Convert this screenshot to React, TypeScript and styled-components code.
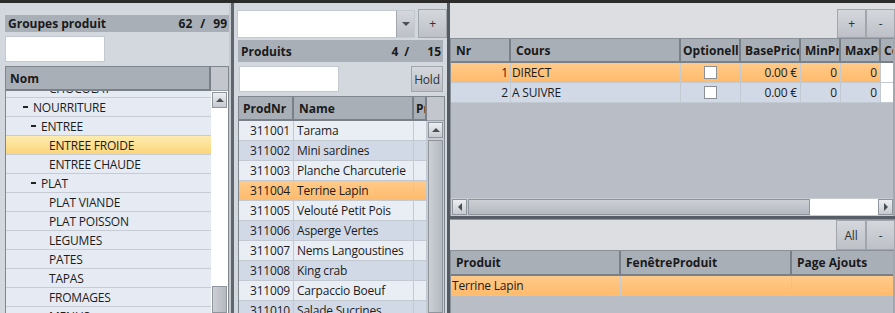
import React, { useLayoutEffect, useRef } from 'react';
import styled, { createGlobalStyle, css } from 'styled-components';

const GlobalStyle = createGlobalStyle`
  html, body { margin: 0; padding: 0; overflow: hidden; background: #2b2b2b; }
  body { font-family: "Open Sans", "Noto Sans", Arial, sans-serif; font-size: 12px; letter-spacing: -0.2px; color: #1c1c1c; }
  * { box-sizing: border-box; }
`;

const Root = styled.div`
  width: 895px;
  height: 313px;
  display: flex;
  flex-direction: column;
  background: #2b2b2b;
  overflow: hidden;
`;

const TopStrip = styled.div`
  height: 3px;
  flex: none;
  background: #2b2b2b;
`;

const Workspace = styled.div`
  flex: 1;
  min-height: 0;
  display: flex;
`;

const Panel = styled.div<{ $w: number; $pad: string }>`
  width: ${p => p.$w}px;
  flex: none;
  display: flex;
  flex-direction: column;
  background: #d3d8df;
  padding: ${p => p.$pad};
  min-height: 0;
`;

const Splitter = styled.div<{ $w: number; $bg: string }>`
  width: ${p => p.$w}px;
  flex: none;
  background: ${p => p.$bg};
`;

const TitleBar = styled.div<{ $h: number; $m: string }>`
  height: ${p => p.$h}px;
  flex: none;
  margin: ${p => p.$m};
  display: flex;
  align-items: center;
  justify-content: space-between;
  background: #a9afb7;
  padding: 0 2px 0 3px;
  font-size: 12px;
  font-weight: 700;
  letter-spacing: 0;
  color: #1a1a1a;
  white-space: nowrap;
`;

const Fraction = styled.div`
  display: flex;
  align-items: center;
`;

const FracPart = styled.span<{ $ml?: number }>`
  margin-left: ${p => p.$ml ?? 0}px;
`;

const SearchInput = styled.input<{ $w: number }>`
  width: ${p => p.$w}px;
  height: 26px;
  flex: none;
  border: 1px solid #c4c9d0;
  background: #fff;
  outline: none;
  padding: 0 4px;
  font: inherit;
`;

const SearchRow = styled.div<{ $m: string }>`
  display: flex;
  justify-content: space-between;
  align-items: center;
  flex: none;
  margin: ${p => p.$m};
`;

const Button = styled.button<{ $w: number; $h: number }>`
  width: ${p => p.$w}px;
  height: ${p => p.$h}px;
  flex: none;
  border: 1px solid #a1a6ad;
  background: linear-gradient(#d4d7dc, #bdc1c7);
  font: inherit;
  letter-spacing: inherit;
  color: #2e3238;
  padding: 0;
  display: flex;
  align-items: center;
  justify-content: center;
`;

const ComboRow = styled.div`
  display: flex;
  align-items: flex-start;
  gap: 3px;
  flex: none;
`;

const Combo = styled.div`
  width: 178px;
  height: 28px;
  margin-top: 1px;
  display: flex;
  border: 1px solid #c4c9d0;
  background: #fff;
`;

const ComboInput = styled.input`
  flex: 1;
  min-width: 0;
  border: none;
  outline: none;
  background: #fff;
  font: inherit;
`;

const ComboButton = styled.div`
  width: 18px;
  flex: none;
  border-left: 1px solid #a1a6ad;
  background: linear-gradient(#d4d7dc, #bdc1c7);
  display: flex;
  align-items: center;
  justify-content: center;
`;

const Arrow = styled.span<{ $dir: 'up' | 'down' | 'left' | 'right'; $c?: string }>`
  width: 0;
  height: 0;
  border-style: solid;
  ${({ $dir, $c = '#4a4f55' }) =>
    $dir === 'up'
      ? css`border-width: 0 4px 4px 4px; border-color: transparent transparent ${$c} transparent;`
      : $dir === 'down'
      ? css`border-width: 4px 4px 0 4px; border-color: ${$c} transparent transparent transparent;`
      : $dir === 'left'
      ? css`border-width: 4px 4px 4px 0; border-color: transparent ${$c} transparent transparent;`
      : css`border-width: 4px 0 4px 4px; border-color: transparent transparent transparent ${$c};`}
`;

/* grids with vertical scrollbar */
const ScrollGrid = styled.div<{ $head: number; $m: string }>`
  flex: 1;
  min-height: 0;
  margin: ${p => p.$m};
  display: grid;
  grid-template-columns: 1fr 17px;
  grid-template-rows: ${p => p.$head}px 1fr;
  border: 1px solid #80868e;
  border-bottom: none;
  background: #fff;
  overflow: hidden;
`;

const HeaderRow = styled.div`
  display: flex;
  min-width: 0;
  overflow: hidden;
  background: #a9afb7;
`;

const HeadCell = styled.div<{ $w?: number; $pl?: number }>`
  ${p => (p.$w ? css`width: ${p.$w}px; flex: none;` : css`flex: 1;`)}
  display: flex;
  align-items: center;
  padding-left: ${p => p.$pl ?? 5}px;
  background: #a9afb7;
  border-right: 2px solid #7a8088;
  border-bottom: 2px solid #7a8088;
  font-size: 12px;
  font-weight: 700;
  letter-spacing: 0;
  color: #1a1a1a;
  white-space: nowrap;
  overflow: hidden;
  text-overflow: clip;
`;

const HeadFiller = styled.div`
  background: #c3c7cd;
  border-bottom: 1px solid #9ba1a8;
`;

const Viewport = styled.div`
  overflow: hidden;
  min-height: 0;
`;

const VScroll = styled.div<{ $track: string }>`
  display: flex;
  flex-direction: column;
  background: ${p => p.$track};
  min-height: 0;
  overflow: hidden;
  padding: 1px 1px 0;
`;

const ScrollArrow = styled.div<{ $w?: number }>`
  ${p => (p.$w ? css`width: ${p.$w}px;` : css`height: 16px;`)}
  flex: none;
  border: 1px solid #8f959c;
  background: linear-gradient(#eceef1, #c6cad0);
  display: flex;
  align-items: center;
  justify-content: center;
`;

const ScrollGap = styled.div<{ $size: number }>`
  flex: none;
  height: ${p => p.$size}px;
`;

const VThumb = styled.div`
  flex: 1;
  border: 1px solid #8f959c;
  background: linear-gradient(90deg, #ccd0d5, #b4b9c0);
`;

/* tree */
const TreeRow = styled.div<{ $level: number; $selected?: boolean }>`
  height: 19px;
  display: flex;
  align-items: center;
  padding-left: ${p => 17 + 8 * (p.$level - 1)}px;
  background: ${p => (p.$selected ? 'linear-gradient(#fdecae, #fbd57c)' : '#e6ebf3')};
  border-bottom: 1px solid #c7ccd4;
  white-space: nowrap;
`;

const Expander = styled.span<{ $on: boolean }>`
  width: 5px;
  height: 2px;
  flex: none;
  margin-right: 5px;
  background: ${p => (p.$on ? '#222' : 'transparent')};
`;

/* data rows */
type Tone = 'light' | 'dark' | 'sel';
const toneBg: Record<Tone, string> = {
  light: '#e9edf4',
  dark: '#d2d9e6',
  sel: 'linear-gradient(#ffca8a, #ffbb6c)',
};

const DataRow = styled.div<{ $tone: Tone }>`
  height: 20px;
  display: flex;
  background: ${p => toneBg[p.$tone]};
  border-bottom: 1px solid #c3c9d1;
  white-space: nowrap;
`;

const Cell = styled.div<{ $w: number; $align?: 'left' | 'right' | 'center'; $pad?: string; $white?: boolean }>`
  width: ${p => p.$w}px;
  flex: none;
  display: flex;
  align-items: center;
  justify-content: ${p => (p.$align === 'right' ? 'flex-end' : p.$align === 'center' ? 'center' : 'flex-start')};
  padding: ${p => p.$pad ?? '0 3px'};
  border-right: 1px solid #c3c9d1;
  overflow: hidden;
  ${p => p.$white && css`background: #fff;`}
`;

const CheckBox = styled.span`
  width: 13px;
  height: 13px;
  background: #fff;
  border: 1px solid #8c9198;
`;

/* right side */
const RightPanel = styled.div`
  flex: 1;
  min-width: 0;
  display: flex;
  flex-direction: column;
  background: #dcdee2;
`;

const Toolbar = styled.div<{ $h: number }>`
  height: ${p => p.$h}px;
  flex: none;
  display: flex;
  justify-content: flex-end;
  align-items: flex-end;
  background: #dcdee2;
`;

const TableFrame = styled.div<{ $h?: number }>`
  ${p => (p.$h ? css`height: ${p.$h}px; flex: none;` : css`flex: 1; min-height: 0;`)}
  display: flex;
  flex-direction: column;
  border-left: 1px solid #8a9097;
  border-top: 1px solid #8a9097;
  border-right: 2px solid #a3a8af;
  background: #b9bec6;
  overflow: hidden;
`;

const TableHeader = styled.div<{ $h: number }>`
  height: ${p => p.$h}px;
  flex: none;
  display: flex;
  overflow: hidden;
`;

const TableBody = styled.div`
  flex: 1;
  min-height: 0;
  overflow: hidden;
`;

const HScroll = styled.div`
  height: 18px;
  flex: none;
  display: flex;
  padding: 1px 0 1px 1px;
  background: #c9cdd3;
`;

const HThumb = styled.div`
  width: 342px;
  flex: none;
  margin-left: 1px;
  border: 1px solid #8f959c;
  background: linear-gradient(#ccd0d5, #b4b9c0);
`;

const HTrack = styled.div`
  flex: 1;
  background: #fff;
`;

const DarkRule = styled.div`
  height: 4px;
  flex: none;
  background: linear-gradient(#575e67 0 75%, #8d939a 75%);
`;

const treeRows = [
  { label: 'CHOCOLAT', level: 3 },
  { label: 'NOURRITURE', level: 1, open: true },
  { label: 'ENTREE', level: 2, open: true },
  { label: 'ENTREE FROIDE', level: 3, selected: true },
  { label: 'ENTREE CHAUDE', level: 3 },
  { label: 'PLAT', level: 2, open: true },
  { label: 'PLAT VIANDE', level: 3 },
  { label: 'PLAT POISSON', level: 3 },
  { label: 'LEGUMES', level: 3 },
  { label: 'PATES', level: 3 },
  { label: 'TAPAS', level: 3 },
  { label: 'FROMAGES', level: 3 },
  { label: 'MENUS', level: 3 },
  { label: 'BOISSONS', level: 3 },
];

const products = [
  ['311001', 'Tarama'],
  ['311002', 'Mini sardines'],
  ['311003', 'Planche Charcuterie'],
  ['311004', 'Terrine Lapin'],
  ['311005', 'Velouté Petit Pois'],
  ['311006', 'Asperge Vertes'],
  ['311007', 'Nems Langoustines'],
  ['311008', 'King crab'],
  ['311009', 'Carpaccio Boeuf'],
  ['311010', 'Salade Sucrines'],
  ['311011', 'Oeuf Cocotte'],
];

const courses = [
  { nr: 1, name: 'DIRECT', tone: 'sel' as Tone },
  { nr: 2, name: 'A SUIVRE', tone: 'dark' as Tone },
];

export default function App() {
  const treeRef = useRef<HTMLDivElement>(null);
  useLayoutEffect(() => {
    if (treeRef.current) treeRef.current.scrollTop = 12;
  }, []);

  return (
    <Root>
      <GlobalStyle />
      <TopStrip />
      <Workspace>
        <Panel $w={229} $pad="12px 0 0 5px">
          <TitleBar $h={17} $m="0">
            <span>Groupes produit</span>
            <Fraction>
              <FracPart>62</FracPart>
              <FracPart $ml={8}>/</FracPart>
              <FracPart $ml={8}>99</FracPart>
            </Fraction>
          </TitleBar>
          <SearchRow $m="4px 0 0 0">
            <SearchInput $w={100} readOnly />
          </SearchRow>
          <ScrollGrid $head={24} $m="4px 0 0 0">
            <HeaderRow>
              <HeadCell $pl={4}>Nom</HeadCell>
            </HeaderRow>
            <HeadFiller />
            <Viewport ref={treeRef}>
              {treeRows.map(r => (
                <TreeRow key={r.label} $level={r.level} $selected={r.selected}>
                  <Expander $on={!!r.open} />
                  {r.label}
                </TreeRow>
              ))}
            </Viewport>
            <VScroll $track="#ffffff">
              <ScrollArrow>
                <Arrow $dir="up" />
              </ScrollArrow>
              <ScrollGap $size={178} />
              <VThumb />
            </VScroll>
          </ScrollGrid>
        </Panel>

        <Splitter $w={7} $bg="linear-gradient(90deg, #c4c9d0 0 2px, #60666e 2px 5px, #d3d8df 5px)" />

        <Panel $w={211} $pad="6px 0 0 1px">
          <ComboRow>
            <Combo>
              <ComboInput readOnly />
              <ComboButton>
                <Arrow $dir="down" />
              </ComboButton>
            </Combo>
            <Button $w={29} $h={29}>+</Button>
          </ComboRow>
          <TitleBar $h={22} $m="2px 4px 0 1px">
            <span>Produits</span>
            <Fraction>
              <FracPart>4</FracPart>
              <FracPart $ml={6}>/</FracPart>
              <FracPart $ml={18}>15</FracPart>
            </Fraction>
          </TitleBar>
          <SearchRow $m="4px 4px 0 2px">
            <SearchInput $w={100} readOnly />
            <Button $w={32} $h={26}>Hold</Button>
          </SearchRow>
          <ScrollGrid $head={24} $m="4px 2px 0 1px">
            <HeaderRow>
              <HeadCell $w={55} $pl={4}>ProdNr</HeadCell>
              <HeadCell $w={120}>Name</HeadCell>
              <HeadCell $pl={2}>Prix</HeadCell>
            </HeaderRow>
            <HeadFiller />
            <Viewport>
              {products.map(([nr, name], i) => (
                <DataRow key={nr} $tone={i === 3 ? 'sel' : i % 2 ? 'dark' : 'light'}>
                  <Cell $w={55} $align="right">{nr}</Cell>
                  <Cell $w={120}>{name}</Cell>
                  <Cell $w={13} />
                </DataRow>
              ))}
            </Viewport>
            <VScroll $track="#c9cdd3">
              <ScrollArrow>
                <Arrow $dir="up" />
              </ScrollArrow>
              <ScrollGap $size={2} />
              <VThumb />
            </VScroll>
          </ScrollGrid>
        </Panel>

        <Splitter $w={3} $bg="#545a62" />

        <RightPanel>
          <Toolbar $h={35}>
            <Button $w={29} $h={29}>+</Button>
            <Button $w={29} $h={29}>-</Button>
          </Toolbar>
          <TableFrame $h={178}>
            <TableHeader $h={24}>
              <HeadCell $w={60}>Nr</HeadCell>
              <HeadCell $w={170}>Cours</HeadCell>
              <HeadCell $w={60} $pl={2}>Optionell</HeadCell>
              <HeadCell $w={60} $pl={4}>BasePrice</HeadCell>
              <HeadCell $w={40} $pl={4}>MinPrice</HeadCell>
              <HeadCell $w={40} $pl={4}>MaxPrice</HeadCell>
              <HeadCell $w={60} $pl={3}>Couleur</HeadCell>
            </TableHeader>
            <TableBody>
              {courses.map(c => (
                <DataRow key={c.nr} $tone={c.tone}>
                  <Cell $w={60} $align="right" $pad="0 2px">{c.nr}</Cell>
                  <Cell $w={170} $pad="0 1px">{c.name}</Cell>
                  <Cell $w={60} $align="center">
                    <CheckBox />
                  </Cell>
                  <Cell $w={60} $align="right">0.00 €</Cell>
                  <Cell $w={40} $align="right">0</Cell>
                  <Cell $w={40} $align="right">0</Cell>
                  <Cell $w={60} $white />
                </DataRow>
              ))}
            </TableBody>
            <HScroll>
              <ScrollArrow $w={15}>
                <Arrow $dir="left" />
              </ScrollArrow>
              <HThumb />
              <HTrack />
              <ScrollArrow $w={15}>
                <Arrow $dir="right" />
              </ScrollArrow>
            </HScroll>
          </TableFrame>
          <DarkRule />
          <Toolbar $h={30}>
            <Button $w={30} $h={30}>All</Button>
            <Button $w={29} $h={30}>-</Button>
          </Toolbar>
          <TableFrame>
            <TableHeader $h={25}>
              <HeadCell $w={170}>Produit</HeadCell>
              <HeadCell $w={171}>FenêtreProduit</HeadCell>
              <HeadCell $w={120}>Page Ajouts</HeadCell>
            </TableHeader>
            <TableBody>
              <DataRow $tone="sel">
                <Cell $w={170} $pad="0 1px">Terrine Lapin</Cell>
                <Cell $w={171} />
                <Cell $w={120} />
              </DataRow>
            </TableBody>
          </TableFrame>
        </RightPanel>
      </Workspace>
    </Root>
  );
}
